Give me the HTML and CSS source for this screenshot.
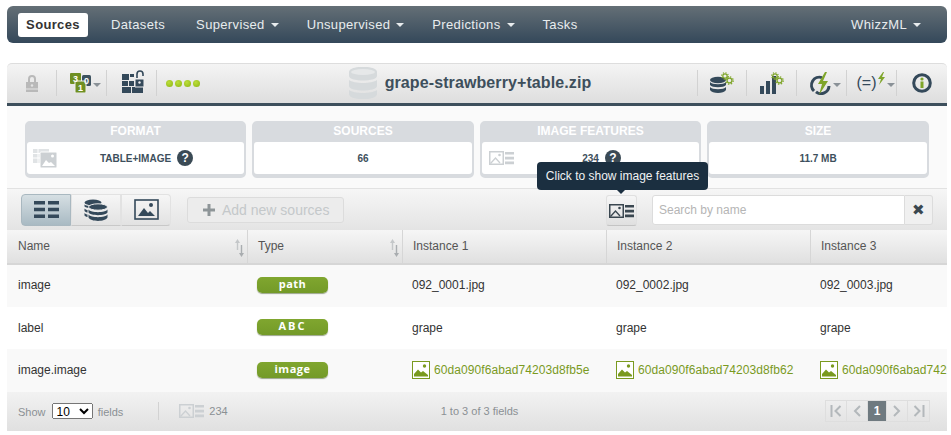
FILE: index.html
```html
<!DOCTYPE html>
<html lang="en">
<head>
  <meta charset="UTF-8">
  <meta name="viewport" content="width=device-width, initial-scale=1.0">
  <title>grape-strawberry+table.zip</title>
  <link rel="stylesheet" href="styles.css">
</head>
<body>
  <svg class="defs" width="0" height="0">
    <symbol id="gear" viewBox="0 0 14 14">
      <circle cx="7" cy="7" r="3.800" fill="none" stroke="currentColor" stroke-width="2"/>
      <circle cx="7" cy="7" r="5.800" fill="none" stroke="currentColor" stroke-width="2" stroke-dasharray="2.200 2.350"/>
    </symbol>
    <symbol id="features" viewBox="0 0 25 16">
      <rect x="0.750" y="1.750" width="13.500" height="12.500" fill="none" stroke="currentColor" stroke-width="1.500"/>
      <path d="M1.500 13.500l5-5.500 4.500 5" fill="none" stroke="currentColor" stroke-width="1.300"/>
      <circle cx="10.500" cy="5" r="1.300" fill="currentColor"/>
      <path d="M16 2h9v2.600h-9zM16 6.800h9v2.600h-9zM16 11.600h9v2.600h-9z" fill="currentColor"/>
    </symbol>
    <symbol id="picture" viewBox="0 0 18 18">
      <rect x="0.500" y="0.500" width="17" height="17" fill="#fff" stroke="currentColor"/>
      <path d="M2 15.500v-2.500l4-4.500 3 3 2-1.500 5 4v1.500z" fill="currentColor"/>
      <circle cx="12.500" cy="5" r="1.700" fill="currentColor"/>
    </symbol>
    <symbol id="sort" viewBox="0 0 9 18">
      <path d="M2.500 0l2.500 4h-1.800v7h-1.400v-7h-1.800z" fill="#c4c7c9"/>
      <path d="M6.500 18l-2.500-4h1.800v-8h1.400v8h1.800z" fill="#a9adb0"/>
    </symbol>
  </svg>

  <nav class="navbar">
    <a class="nav-item active" href="#">Sources</a>
    <a class="nav-item datasets" href="#">Datasets</a>
    <a class="nav-item caret" href="#">Supervised</a>
    <a class="nav-item caret" href="#">Unsupervised</a>
    <a class="nav-item caret" href="#">Predictions</a>
    <a class="nav-item" href="#">Tasks</a>
    <a class="nav-item caret whizzml" href="#">WhizzML</a>
  </nav>

  <section class="panel">
    <header class="panel-head">
      <div class="tool">
        <svg width="12" height="17" viewBox="0 0 12 17">
          <path d="M3 8v-4a3 3 0 0 1 6 0v4" fill="none" stroke="#b9b9b9" stroke-width="2"/>
          <path d="M0 7h12v10h-12z" fill="#b9b9b9"/>
          <path d="M0 13.500h12v1h-12z" fill="#e4e4e4"/>
          <circle cx="6" cy="10.500" r="1.200" fill="#e4e4e4"/>
        </svg>
      </div>
      <div class="tool counts-tool">
        <svg width="21" height="20" viewBox="0 0 21 20">
          <rect x="0" y="0" width="11" height="11" rx="1" fill="#6f8f22"/>
          <rect x="12" y="2" width="9" height="11" rx="1.500" fill="#3d5260"/>
          <rect x="5" y="8" width="11" height="12" rx="1" fill="#6f8f22" stroke="#eee"/>
          <text x="5.500" y="8.500" class="digit">3</text>
          <text x="16.500" y="10.500" class="digit">0</text>
          <text x="10.500" y="17.500" class="digit">1</text>
        </svg>
        <span class="mini-caret"></span>
      </div>
      <div class="tool">
        <svg class="lock-blocks" width="23" height="23" viewBox="0 0 23 23">
          <path d="M0 4h7v6h-7zM8 4h4v3h-4zM0 11h6v5h-6zM7 11h5v5h-5zM0 17h9v6h-9zM10 17h11v6h-11z" fill="#34495a"/>
          <path d="M13 9h9v8h-9z" fill="#34495a" stroke="#eee"/>
          <path d="M15 8v-4a3 3 0 0 1 6 0v2" fill="none" stroke="#34495a" stroke-width="1.600"/>
          <circle cx="17.500" cy="12.500" r="1.200" fill="#eee"/>
        </svg>
      </div>
      <div class="status-dots"><i></i><i></i><i></i><i></i></div>
      <h1 class="title">
        <svg width="28" height="32" viewBox="0 0 28 32">
          <path d="M0 5c0-7 28-7 28 0v4c0 6-28 6-28 0z" fill="#d6dadc"/>
          <path d="M0 13c5 4 23 4 28 0v6c0 6-28 6-28 0z" fill="#d6dadc"/>
          <path d="M0 23c5 4 23 4 28 0v4c0 7-28 7-28 0z" fill="#d6dadc"/>
          <ellipse cx="14" cy="5" rx="12" ry="3" fill="#e6e8e9"/>
        </svg>
        <span>grape-strawberry+table.zip</span>
      </h1>
      <div class="tool">
        <svg width="24" height="22" viewBox="0 0 24 22">
          <ellipse cx="8" cy="8" rx="8" ry="3.200" fill="#34495a"/>
          <path d="M0 10c2 3 14 3 16 0v3c-2 3-14 3-16 0zM0 15c2 3 14 3 16 0v3c-2 4-14 4-16 0z" fill="#34495a"/>
          <use href="#gear" x="11" y="0" width="8" height="8" class="green"/>
          <use href="#gear" x="15" y="4" width="9" height="9" class="green"/>
        </svg>
      </div>
      <div class="tool">
        <svg width="24" height="22" viewBox="0 0 24 22">
          <path d="M0 14h4v8h-4zM6 9h4v13h-4zM12 4h4v18h-4z" fill="#34495a"/>
          <use href="#gear" x="11" y="0" width="8" height="8" class="green"/>
          <use href="#gear" x="15" y="4" width="9" height="9" class="green"/>
        </svg>
      </div>
      <div class="tool cycle-tool">
        <svg width="22" height="23" viewBox="0 0 22 23">
          <path d="M13 5.600a8 8 0 0 0-8 13.400" fill="none" stroke="#34495a" stroke-width="3"/>
          <path d="M7 19.800a8 8 0 0 0 13-5.800" fill="none" stroke="#34495a" stroke-width="3"/>
          <path d="M16 0l-7 12h4l-3 11 9-14h-5l4-9z" fill="#7fa52a"/>
        </svg>
        <span class="mini-caret"></span>
      </div>
      <div class="tool">
        <span class="formula">(=)</span>
        <svg class="formula-bolt" width="7" height="13" viewBox="0 0 7 13">
          <path d="M5 0l-5 7h3l-2 6 6-8h-3l2-5z" fill="#7fa52a"/>
        </svg>
        <span class="mini-caret"></span>
      </div>
      <div class="tool">
        <svg width="20" height="20" viewBox="0 0 20 20">
          <circle cx="10" cy="10" r="8.300" fill="none" stroke="#34495a" stroke-width="3"/>
          <path d="M8.500 8.500h3v6.500h-3z" fill="#7fa52a"/>
          <circle cx="10" cy="6" r="1.600" fill="#7fa52a"/>
        </svg>
      </div>
    </header>

    <div class="summary">
      <div class="card">
        <h2>FORMAT</h2>
        <div class="card-body">
          <svg class="card-icon" width="24" height="19" viewBox="0 0 24 19">
            <path d="M0 0h16v14h-16z" fill="#e0e3e5"/>
            <path d="M0 4.500h16M0 9h16M5 0v14" stroke="#fff"/>
            <rect x="7" y="3" width="17" height="16" rx="1" fill="#ccd0d3" stroke="#fff"/>
            <path d="M9 17l4-6 3 3 2-1 4 4z" fill="#fff"/>
            <circle cx="19.500" cy="7" r="1.500" fill="#fff"/>
          </svg>
          <strong>TABLE+IMAGE</strong>
          <span class="help">?</span>
        </div>
      </div>
      <div class="card">
        <h2>SOURCES</h2>
        <div class="card-body">
          <span></span>
          <strong>66</strong>
        </div>
      </div>
      <div class="card">
        <h2>IMAGE FEATURES</h2>
        <div class="card-body">
          <svg class="card-icon pale" width="27" height="16"><use href="#features"/></svg>
          <strong>234</strong>
          <span class="help">?</span>
        </div>
      </div>
      <div class="card">
        <h2>SIZE</h2>
        <div class="card-body">
          <span></span>
          <strong>11.7 MB</strong>
        </div>
      </div>
    </div>

    <div class="toolbar">
      <div class="view-switch">
        <button class="view-btn active" type="button">
          <svg width="25" height="17" viewBox="0 0 25 17">
            <path d="M0 0h11v3.500h-11zM14 0h11v3.500h-11zM0 6.700h11v3.500h-11zM14 6.700h11v3.500h-11zM0 13.500h11v3.500h-11zM14 13.500h11v3.500h-11z" fill="#34495a"/>
          </svg>
        </button>
        <button class="view-btn" type="button">
          <svg width="24" height="22" viewBox="0 0 24 22">
            <ellipse cx="9" cy="3.500" rx="8.500" ry="3" fill="#34495a"/>
            <path d="M0.500 5.500c2 2 14 2 16 0v2c-2 2-14 2-16 0zM0.500 9.500c1 1 2 1.400 3 1.600v2.400c-1-.2-2-.6-3-1.600zM0.500 14c1 1 2 1.400 3 1.600v2.400c-1-.2-2-.6-3-1.600z" fill="#34495a"/>
            <ellipse cx="14" cy="8" rx="9.500" ry="3.200" fill="#34495a" stroke="#eee"/>
            <path d="M4.500 10.500c2 3.500 17 3.500 19 0v3c-2 3.500-17 3.500-19 0zM4.500 15.500c2 3.500 17 3.500 19 0v3c-2 4.500-17 4.500-19 0z" fill="#34495a"/>
          </svg>
        </button>
        <button class="view-btn" type="button">
          <svg width="25" height="21" viewBox="0 0 25 21">
            <rect x="1" y="1" width="23" height="19" fill="none" stroke="#34495a" stroke-width="1.600"/>
            <path d="M4 17l6-8 4 5 2-2 5 5z" fill="#34495a"/>
            <circle cx="17" cy="6" r="2" fill="#34495a"/>
          </svg>
        </button>
      </div>
      <button class="add-btn" type="button">
        <svg class="plus" width="12" height="12" viewBox="0 0 12 12">
          <path d="M4.500 0h3v4.500h4.500v3h-4.500v4.500h-3v-4.500h-4.500v-3h4.500z" fill="#8e9598"/>
        </svg>
        Add new sources
      </button>
      <div class="feature-toggle">
        <button class="toggle-btn" type="button">
          <svg width="25" height="16"><use href="#features"/></svg>
        </button>
        <div class="tooltip">Click to show image features</div>
      </div>
      <div class="search">
        <input type="text" placeholder="Search by name">
        <button class="search-clear" type="button">&#10006;</button>
      </div>
    </div>

    <div class="table-wrap">
      <table class="fields">
        <thead>
          <tr>
            <th class="col-name">Name<svg class="sort" width="9" height="18"><use href="#sort"/></svg></th>
            <th class="col-type">Type<svg class="sort" width="9" height="18"><use href="#sort"/></svg></th>
            <th>Instance 1</th>
            <th>Instance 2</th>
            <th>Instance 3</th>
          </tr>
        </thead>
        <tbody>
          <tr>
            <td>image</td>
            <td><span class="pill">path</span></td>
            <td>092_0001.jpg</td>
            <td>092_0002.jpg</td>
            <td>092_0003.jpg</td>
          </tr>
          <tr>
            <td>label</td>
            <td><span class="pill abc">ABC</span></td>
            <td>grape</td>
            <td>grape</td>
            <td>grape</td>
          </tr>
          <tr>
            <td>image.image</td>
            <td><span class="pill">image</span></td>
            <td><a class="image-link" href="#"><svg width="18" height="18"><use href="#picture"/></svg>60da090f6abad74203d8fb5e</a></td>
            <td><a class="image-link" href="#"><svg width="18" height="18"><use href="#picture"/></svg>60da090f6abad74203d8fb62</a></td>
            <td><a class="image-link" href="#"><svg width="18" height="18"><use href="#picture"/></svg>60da090f6abad74203d8fb66</a></td>
          </tr>
        </tbody>
      </table>
    </div>

    <footer class="table-foot">
      <label class="page-size">Show
        <select><option>10</option><option>25</option><option>50</option></select>
        fields</label>
      <div class="foot-count">
        <svg class="pale" width="25" height="16"><use href="#features"/></svg>
        <span>234</span>
      </div>
      <div class="foot-range">1 to 3 of 3 fields</div>
      <div class="pager">
        <span class="page-cell"><svg width="12" height="12" viewBox="0 0 12 12"><path d="M1.500 0v12M10.500 1l-5 5 5 5" fill="none" stroke="#b3b8bb" stroke-width="2"/></svg></span>
        <span class="page-cell"><svg width="8" height="12" viewBox="0 0 8 12"><path d="M7 1l-5 5 5 5" fill="none" stroke="#b3b8bb" stroke-width="2"/></svg></span>
        <span class="page-cell current">1</span>
        <span class="page-cell"><svg width="8" height="12" viewBox="0 0 8 12"><path d="M1 1l5 5-5 5" fill="none" stroke="#b3b8bb" stroke-width="2"/></svg></span>
        <span class="page-cell"><svg width="12" height="12" viewBox="0 0 12 12"><path d="M10.500 0v12M1.500 1l5 5-5 5" fill="none" stroke="#b3b8bb" stroke-width="2"/></svg></span>
      </div>
    </footer>
  </section>
</body>
</html>
```

FILE: styles.css
```css
* {
  box-sizing: border-box;
}
body {
  margin: 0;
  padding: 6px 4px 4px 7px;
  height: 435px;
  overflow: hidden;
  font-family: "Liberation Sans", Arial, sans-serif;
  font-size: 12px;
  color: #333;
  background-color: #fff;
  background-image: radial-gradient(#d4d4d4 0.6px, transparent 0.7px);
  background-size: 2px 2px;
}
a {
  text-decoration: none;
}
.defs {
  position: absolute;
}
.green {
  color: #7fa52a;
}
.pale {
  color: #ccd0d3;
}

/* top navigation */
.navbar {
  display: flex;
  align-items: center;
  height: 37px;
  padding: 0 11px;
  border-radius: 6px;
  background: linear-gradient(#646f76, #34485a);
}
.nav-item {
  margin-right: 28px;
  font-size: 13px;
  letter-spacing: 0.35px;
  color: #e8ecee;
}
.nav-item.active {
  width: 70px;
  height: 24px;
  margin-right: 23px;
  border-radius: 3px;
  font-weight: bold;
  line-height: 24px;
  text-align: center;
  color: #333;
  background: #fff;
}
.nav-item.datasets {
  margin-right: 31px;
}
.nav-item.caret::after {
  content: "";
  display: inline-block;
  margin-left: 6px;
  vertical-align: 2px;
  border-top: 4px solid #e8ecee;
  border-left: 4px solid transparent;
  border-right: 4px solid transparent;
}
.nav-item.whizzml {
  margin-left: auto;
  margin-right: 15px;
}

/* resource panel */
.panel {
  margin-top: 20px;
  border-radius: 5px 5px 0 0;
  background: #fafafa;
}
.panel-head {
  display: flex;
  align-items: center;
  height: 43px;
  padding-bottom: 1px;
  border-top: 1px solid #ddd;
  border-bottom: 3px solid #3d4f5c;
  border-radius: 5px 5px 0 0;
  background: linear-gradient(#f4f4f4, #dedede);
}
.tool {
  display: flex;
  align-items: center;
  justify-content: center;
  width: 50px;
  height: 26px;
  border-right: 1px solid #d2d2d2;
}
.title + .tool {
  border-left: 1px solid #d2d2d2;
}
.panel-head .tool:last-child {
  border-right: 0;
}
.counts-tool svg {
  margin-left: 8px;
}
.cycle-tool svg {
  margin-left: 6px;
}
.lock-blocks {
  margin: -4px 0 0 3px;
}
.digit {
  font-size: 9px;
  font-weight: bold;
  fill: #fff;
  text-anchor: middle;
}
.mini-caret {
  margin: 4px 0 0 2px;
  border-top: 4px solid #8a9197;
  border-left: 4px solid transparent;
  border-right: 4px solid transparent;
}
.status-dots {
  display: flex;
  gap: 2px;
  margin-left: 9px;
}
.status-dots i {
  width: 7px;
  height: 7px;
  border-radius: 50%;
  background: radial-gradient(circle at 40% 35%, #bcde3a, #8cb514);
}
.title {
  flex: 1;
  display: flex;
  align-items: center;
  justify-content: center;
  gap: 8px;
  margin: 0;
  padding-left: 43px;
  font-size: 16px;
  letter-spacing: 0.1px;
  font-weight: bold;
  color: #3d4f5c;
}
.formula {
  margin-left: 8px;
  font-size: 16px;
  color: #34495a;
}
.formula-bolt {
  margin: -10px 0 0 1px;
}

/* summary cards */
.summary {
  display: grid;
  grid-template-columns: 221px 222px 221px 222px;
  gap: 6px;
  height: 82px;
  padding: 15px 18px 10px;
}
.card {
  border: 2px solid #d8dbdf;
  border-radius: 5px;
  background: #d8dbdf;
}
.card h2 {
  margin: 0;
  height: 19px;
  font-size: 12px;
  line-height: 17px;
  font-weight: bold;
  text-align: center;
  color: #fff;
}
.card-body {
  display: grid;
  grid-template-columns: 1fr auto 1fr;
  align-items: center;
  column-gap: 6px;
  height: 32px;
  padding: 0 6px;
  border-radius: 3px;
  background: #fff;
}
.card-body strong {
  font-size: 10px;
  color: #3d4f5c;
}
.help {
  display: flex;
  align-items: center;
  justify-content: center;
  width: 16px;
  height: 16px;
  border-radius: 50%;
  font-size: 12px;
  font-weight: bold;
  color: #fff;
  background: #3a4a55;
}

/* toolbar above the table */
.toolbar {
  display: flex;
  align-items: center;
  height: 42px;
  padding: 0 14px;
  border-top: 1px solid #e2e2e2;
  background: linear-gradient(#f6f6f6, #e4e4e4);
}
.view-switch {
  display: flex;
  margin-right: 16px;
}
.view-btn {
  display: flex;
  align-items: center;
  justify-content: center;
  width: 50px;
  height: 32px;
  padding: 0;
  border: 1px solid #e2e2e2;
  border-bottom-color: #c8c8c8;
  background: linear-gradient(#f6f6f6, #e2e2e2);
}
.view-btn:first-child {
  border-radius: 4px 0 0 4px;
}
.view-btn:last-child {
  border-radius: 0 4px 4px 0;
}
.view-btn.active {
  border-color: #a9b8c0;
  background: linear-gradient(#d6dfe3, #a9bac3);
}
.add-btn {
  display: flex;
  align-items: center;
  width: 157px;
  height: 26px;
  padding: 0 15px;
  border: 1px solid #dcdcdc;
  border-radius: 3px;
  font-family: inherit;
  font-size: 14px;
  white-space: nowrap;
  color: #c4c8ca;
  background: #ececec;
}
.plus {
  flex: none;
  margin-right: 7px;
}
.feature-toggle {
  position: relative;
  margin: 2px 15px 0 auto;
}
.toggle-btn {
  display: flex;
  align-items: center;
  justify-content: center;
  width: 31px;
  height: 31px;
  padding: 0;
  border: 1px solid #e0e0e0;
  border-bottom-color: #c4c4c4;
  border-radius: 3px;
  color: #3a4750;
  background: linear-gradient(#f6f6f6, #e0e0e0);
}
.tooltip {
  position: absolute;
  left: -69px;
  top: -33px;
  width: 171px;
  height: 28px;
  border-radius: 4px;
  font-size: 12px;
  line-height: 28px;
  text-align: center;
  white-space: nowrap;
  color: #f0f2f3;
  background: #1b2f40;
}
.tooltip::after {
  content: "";
  position: absolute;
  left: 80px;
  top: 28px;
  border-top: 4px solid #1b2f40;
  border-left: 4px solid transparent;
  border-right: 4px solid transparent;
}
.search {
  display: flex;
  width: 281px;
  height: 30px;
  margin-top: 1px;
}
.search input {
  flex: 1;
  min-width: 0;
  padding: 0 6px;
  border: 1px solid #dcdcdc;
  border-radius: 3px 0 0 3px;
  outline: none;
  font-family: inherit;
  font-size: 12px;
  background: #fff;
}
.search input::placeholder {
  color: #b5b5b5;
}
.search-clear {
  width: 28px;
  padding: 0;
  border: 1px solid #dcdcdc;
  border-left: 0;
  border-radius: 0 3px 3px 0;
  font-size: 15px;
  color: #3a4750;
  background: #f0f0f0;
}

/* fields table */
.table-wrap {
  overflow: hidden;
}
.fields {
  table-layout: fixed;
  width: 1008px;
  border-collapse: separate;
  border-spacing: 0;
}
.fields th {
  height: 35px;
  padding: 0 10px 2px;
  border-right: 1px solid #d6d6d6;
  border-bottom: 2px solid #d6d6d6;
  font-weight: normal;
  text-align: left;
  color: #555;
  background: linear-gradient(#f6f6f6, #e0e0e0);
}
.fields th.col-name {
  width: 241px;
  padding-left: 11px;
  position: relative;
}
.fields th.col-type {
  width: 155px;
  position: relative;
}
.sort {
  position: absolute;
  right: 3px;
  top: 9px;
}
.fields td {
  height: 42px;
  padding: 0 9px 2px;
  white-space: nowrap;
  overflow: hidden;
  color: #333;
  background: #fff;
}
.fields td:first-child {
  padding-left: 11px;
}
.fields tr:nth-child(2) td {
  padding-bottom: 0;
}
.fields tr:nth-child(odd) td {
  background: #f9f9f9;
}
.fields tr:last-child td {
  height: 43px;
}
.pill {
  display: block;
  width: 71px;
  height: 16px;
  border-radius: 5px;
  font-family: "Open Sans", sans-serif;
  font-size: 11px;
  line-height: 14px;
  font-weight: bold;
  letter-spacing: 0.5px;
  text-align: center;
  color: #fff;
  background: linear-gradient(#80a62f, #739a28);
  box-shadow: 0 1px 1px #9aa58a;
}
.pill.abc {
  margin-top: -2px;
  letter-spacing: 2px;
}
.image-link {
  display: flex;
  align-items: center;
  gap: 4px;
  letter-spacing: 0.08px;
  color: #7a9a1f;
}
.image-link svg {
  flex: none;
}

/* table footer */
.table-foot {
  display: flex;
  align-items: center;
  height: 39px;
  padding: 0 17px 2px 11px;
  font-size: 11px;
  color: #8b9094;
  background: linear-gradient(#f2f2f2, #e0e0e0);
}
.page-size select {
  margin: 0 2px 0 3px;
  width: 41px;
  height: 16px;
  font-family: inherit;
  font-size: 12px;
}
.foot-count {
  display: flex;
  align-items: center;
  gap: 5px;
  margin-left: 35px;
  padding-left: 20px;
  height: 18px;
  border-left: 1px solid #d2d2d2;
}
.foot-range {
  margin-left: 213px;
}
.pager {
  display: flex;
  margin-left: auto;
  border: 1px solid #dedede;
}
.page-cell {
  display: flex;
  align-items: center;
  justify-content: center;
  width: 21px;
  height: 20px;
  border-right: 1px solid #dedede;
}
.page-cell:last-child {
  border-right: 0;
}
.page-cell.current {
  width: 19px;
  font-size: 12px;
  font-weight: bold;
  color: #fff;
  background: #6f7a80;
}
```
